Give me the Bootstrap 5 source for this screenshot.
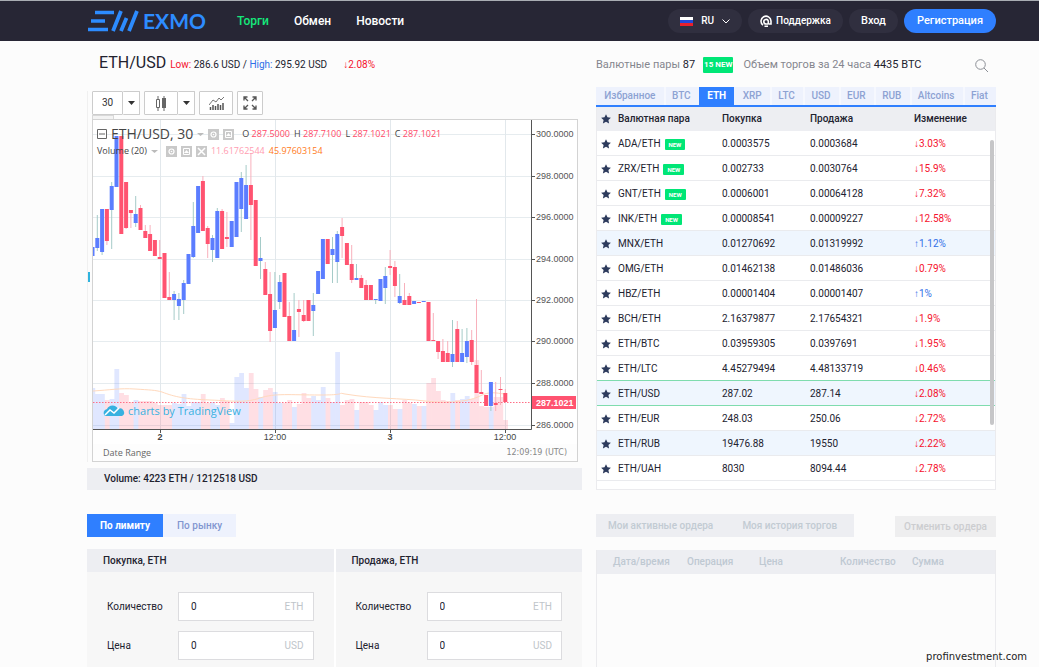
<!DOCTYPE html>
<html lang="ru">
<head>
<meta charset="utf-8">
<meta name="viewport" content="width=device-width, initial-scale=1">
<title>EXMO — ETH/USD</title>
<link href="https://cdn.jsdelivr.net/npm/bootstrap@5.3.0/dist/css/bootstrap.min.css" rel="stylesheet">
<style>
:root{--ink:#22222f;--blue:#2f7fff;--head:#edeef2;--soft:#eef2fd;--red:#f5122d}
body{font-family:Roboto,"Liberation Sans",sans-serif;font-size:10px;line-height:16px;color:var(--ink);background:#fcfcfc}
a{text-decoration:none}
.shell{padding-left:87px;padding-right:43px}
.cols{column-gap:14px}
.topbar{background:#272635;border-top:1px solid #a9adb3;height:41px;font-size:12px}
.topbar .nav{column-gap:25px}
.topbar .nav-link{color:#fff;padding:0;font-weight:500}
.topbar .nav-link.active{color:#15e87b}
.logo{width:126px}
.brandtext{font-family:Lato,sans-serif;font-size:21px;font-weight:700;line-height:24px;color:#2d8cff}
.pills{column-gap:6px}
.pill{background:#302f3f;color:#fff;border:0;border-radius:12px;height:24px;font-weight:500;font-size:11px;line-height:16px;padding:0 12px}
.pill.compact{font-size:10px}
.pill.primary{background:var(--blue);padding:0 13px}
.leftcol{flex:495 1 0;min-width:0}
.rightcol{flex:400 1 0;min-width:0}
.titlebar{height:50px;white-space:nowrap;padding-bottom:2px}
.titlebar.stats{height:46px}
.titlebar h1{font-size:16px;line-height:20px;font-weight:400}
.down{color:var(--red)} .up{color:#2f6fe8}
.muted{color:#85868e}
.fs11{font-size:11px}
.newcount{background:#00e676;color:#fff;font-size:8px;font-weight:700;line-height:16px;padding:0 1px;border-radius:1px;margin:0 10px 0 8px}
.tool{background:#fff;border:1px solid #ccc;border-radius:1px;height:24px;padding:0;color:#333;font-size:10px;display:flex;align-items:center;justify-content:center}
.tool+.tool.joined{border-left:0}
.t-arrow{width:17px}.t-text{width:31px}.t-wide{width:34px}.t-square{width:26px}
.chartwrap{border-left:1px solid #f0f0f0;padding-left:4px;padding-right:4px}
.chartbox{border:1px solid #d3d3d3;background:#fff}
.chartbox svg.plot{display:block;width:100%;height:auto}
.handle{width:22px;height:4px;border:1px solid #d8d8d8;border-bottom:0;background:#f3f3f3}
.sidetab{left:0;top:181px;width:2px;height:10px;background:#2fb3de}
.legend{left:4px;top:5px;font-family:"Open Sans",sans-serif;color:#444;font-size:9px;line-height:16px;white-space:nowrap}
.legend .sym{font-size:14px;line-height:18px}
.legend .vol{color:#ff9db1}
.legend .avg{color:#ff7b23}
.val{color:#ff4a68}
.foot{font-family:"Open Sans",sans-serif;font-size:9px;line-height:17px;color:#666;background:#fdfdfd;padding:0 10px}
.foot .clock{font-family:"DejaVu Sans",sans-serif;font-size:8px;color:#888}
.strip{background:var(--head);font-weight:500;line-height:22px;padding-left:17px;margin-top:6px}
.pairs .nav-link{background:var(--soft);color:#8da2d3;font-weight:500;font-size:10px;line-height:18px;padding:0 7px;border-radius:0}
.pairs .nav-link:not(.active)+.nav-link:not(.active){box-shadow:inset 2px 0 #f6f8fe}
.pairs .nav-link.active{background:var(--blue);color:#fff;font-weight:700}
.pairs{border-bottom:2px solid var(--blue)}
.quotes{table-layout:fixed;border-collapse:separate;border-spacing:0;font-size:10px;line-height:16px;color:var(--ink);background:#fff}
.quotes>thead>tr>th{background:var(--head);padding:4px 0;border:0;font-weight:500;color:var(--ink);height:24px;vertical-align:middle}
.quotes>tbody>tr>td{padding:5px 0 3px;border-bottom:1px solid #eaebee;color:var(--ink);background:transparent;height:25px;vertical-align:middle}
.quotes>tbody>tr.tint>td{background:#eff6fe}
.quotes>tbody>tr.chosen>td{border-bottom-color:#7fdcae;background:#eff6fe}
.quotes>tbody>tr.prechosen>td{border-bottom-color:#7fdcae}
.quotes>tbody>tr>td.down{color:var(--red)} .quotes>tbody>tr>td.up{color:#2f6fe8}
.quotes .c1{width:21px}.quotes .c2{width:104px}.quotes .c3{width:88px}.quotes .c4{width:104px}
.quotes .starcell{line-height:1}
.quotes svg{display:block;margin-left:4px}
.tag{background:#00e676;color:#fff;font-size:6px;font-weight:700;line-height:11px;padding:0 4px;border-radius:1px;margin-left:4px}
.pairbox{border:1px solid #ebebee;border-top:0;background:#fff}
.scrollthumb{right:1px;top:33px;width:4px;height:285px;background:#c6c6c8;border-radius:2px}
.modes .btn{border:0;border-radius:0;font-size:10px;line-height:23px;padding:0 14px;background:var(--soft);color:#8296d0;font-weight:500}
.modes .btn.active{background:var(--blue);color:#fff;font-weight:700;padding:0 13px}
.panelhead{background:var(--head);font-weight:500;line-height:23px;padding:0 16px}
.ticket{background:#f7f7f7}
.ticket label{flex:none;width:71px}
.ticket .form-control{font-size:10px;line-height:17px;padding:5px 12px;border:1px solid #dcdcdf;border-radius:0;color:var(--ink);height:29px}
.ticket .unit{right:10px;top:7px;color:#c0c5ca}
.fields{padding:20px 20px 6px;row-gap:10px}
.faded .btn{font-size:10px;color:#c2cbd3;border:0;border-radius:0;background:var(--head);font-weight:500;line-height:23px;padding:0 12px;min-width:129px}
.faded .btn.cancel{background:#eeeeef;color:#cccdd0;line-height:21px;padding:0 8px;min-width:101px}
.ordersbox{margin-top:13px}
.orders{table-layout:fixed;font-size:10px;line-height:16px}
.orders>thead>tr>th{background:var(--head);color:#bfc9d2;padding:4px 0;border:0;font-weight:500;height:23px}
.orders .o1{width:90px}.orders .o2{width:72px}.orders .o3{width:81px}
.source{right:12px;bottom:2px;font-family:"DejaVu Sans",sans-serif;font-size:10px;color:#222}
</style>
</head>
<body class="min-vh-100 d-flex flex-column position-relative">
<svg class="d-none" aria-hidden="true">
  <symbol id="star" viewBox="0 0 10 10"><path fill="#2c3a5c" d="M5 .2 6.500 3.300 9.900 3.700 7.400 6 8.100 9.500 5 7.800 1.900 9.500 2.600 6 .1 3.700 3.500 3.300z"/></symbol>
  <symbol id="mini-eye" viewBox="0 0 11 11"><path fill="#c9c9c9" d="M0 0h11v11H0z"/><circle cx="5.500" cy="5.500" r="2.500" fill="none" stroke="#fff" stroke-width="1.200"/><circle cx="5.500" cy="5.500" r=".8" fill="#fff"/></symbol>
  <symbol id="mini-up" viewBox="0 0 11 11"><path fill="#c9c9c9" d="M0 0h11v11H0z"/><path fill="none" stroke="#fff" d="M2.500 2.500h6v6h-6z"/><path fill="#fff" d="M5.500 4 8 7H3z"/></symbol>
  <symbol id="mini-x" viewBox="0 0 11 11"><path fill="#c9c9c9" d="M0 0h11v11H0z"/><path stroke="#fff" stroke-width="1.500" d="m2 2 7 7M9 2 2 9"/></symbol>
  <symbol id="caret" viewBox="0 0 7 4"><path d="M0 0h7L3.500 4z" fill="#333"/></symbol>
</svg>
<header class="topbar shell d-flex align-items-center">
  <a href="#" class="logo d-flex align-items-center" aria-label="EXMO">
    <svg width="52" height="22" viewBox="0 0 52 22" fill="none" stroke="#2d8cff" stroke-width="3.500" aria-hidden="true">
      <path d="M8 2.500H27M4 11H18M1 19.500H21"/><path d="M26 21 34 1M34 21 39.500 8M42 21 50 1" stroke-width="3.800"/>
    </svg>
    <span class="brandtext ps-1">EXMO</span>
  </a>
  <nav class="nav ms-4 flex-nowrap">
    <a class="nav-link active" href="#">Торги</a><a class="nav-link" href="#">Обмен</a><a class="nav-link" href="#">Новости</a>
  </nav>
  <div class="pills d-flex ms-auto align-items-center">
    <button class="pill compact d-flex align-items-center" type="button">
      <svg width="13" height="9" aria-hidden="true"><path fill="#fff" d="M0 0h13v3H0z"/><path fill="#2447d8" d="M0 3h13v3H0z"/><path fill="#e8202c" d="M0 6h13v3H0z"/></svg>
      <span class="mx-2">RU</span>
      <svg width="8" height="5" fill="none" stroke="#fff" aria-hidden="true"><path d="M.5.5 4 4 7.500.500"/></svg>
    </button>
    <button class="pill compact d-flex align-items-center" type="button">
      <svg class="me-1" width="12" height="12" fill="none" stroke="#fff" stroke-width="1.600" aria-hidden="true"><path d="M3 10.200A5 5 0 1 1 11 6v3H8.500M4.500 11.200h3.500"/><path d="M8.500 9H6A2.300 2.300 0 1 1 8.300 6v3"/></svg>
      Поддержка
    </button>
    <button class="pill" type="button">Вход</button>
    <button class="pill primary" type="button">Регистрация</button>
  </div>
</header>

<main class="shell d-flex flex-column flex-grow-1">
  <div class="d-flex cols">
    <section class="leftcol">
      <div class="titlebar d-flex align-items-center ps-2">
        <h1 class="mb-1 ms-1 me-1">ETH/USD</h1>
        <span><span class="down">Low:</span> 286.6 USD / <span class="up">High:</span> 295.92 USD</span>
        <span class="down ms-3">↓2.08%</span>
      </div>
      <div class="chartwrap position-relative">
        <div class="sidetab position-absolute"></div>
        <div class="d-flex gap-1">
          <div class="d-flex"><button class="tool t-text" type="button">30</button><button class="tool joined t-arrow" type="button" aria-label="Интервал"><svg width="7" height="4"><use href="#caret"/></svg></button></div>
          <div class="d-flex"><button class="tool t-wide" type="button" aria-label="Свечи"><svg width="12" height="15"><path d="M3 0v15M9 0v15" stroke="#666"/><path d="M1.500 3.500h3v8h-3z" fill="#fff" stroke="#666"/><path d="M7 2h4v10H7z" fill="#666"/></svg></button><button class="tool joined t-arrow" type="button" aria-label="Тип графика"><svg width="7" height="4"><use href="#caret"/></svg></button></div>
          <button class="tool t-wide" type="button" aria-label="Индикаторы"><svg width="15" height="14" fill="none" stroke="#555"><path d="M1.500 14v-3M4 14v-5M6.500 14v-4M9 14V8M11.500 14v-5M14 14V7" stroke-width="1.500"/><path d="M0 9 4 4l3 2 3-4 2 2 3-3" stroke-width=".8"/></svg></button>
          <button class="tool t-square" type="button" aria-label="Полный экран"><svg width="14" height="14" fill="none" stroke="#555" stroke-width="1.300"><path d="M1 4.500V1h3.500M1 1l4 4M9.500 1H13v3.500M13 1 9 5M1 9.500V13h3.500M1 13l4-4M13 9.500V13H9.500M13 13 9 9"/></svg></button>
        </div>
        <div class="handle"></div>
        <div class="chartbox position-relative">
          <svg class="plot" id="plot" viewBox="93 120 484 324" role="img" aria-label="График ETH/USD"></svg>
          <div class="legend position-absolute">
            <div class="d-flex align-items-center">
              <svg width="10" height="10" fill="#fff" stroke="#666"><path d="M.5.5h9v9h-9zM2 5h6"/></svg>
              <span class="sym ms-1">ETH/USD, 30</span>
              <svg class="ms-1" width="7" height="3"><path d="M0 0h7L3.500 3z" fill="#bbb"/></svg>
              <svg class="ms-1" width="11" height="11"><use href="#mini-eye"/></svg><svg class="ms-1" width="11" height="11"><use href="#mini-up"/></svg>
              <span class="ms-1 ps-1">O <span class="val">287.5000</span></span><span class="ms-1">H <span class="val">287.7100</span></span><span class="ms-1">L <span class="val">287.1021</span></span><span class="ms-1">C <span class="val">287.1021</span></span>
            </div>
            <div class="d-flex align-items-center">
              <span>Volume (20)</span>
              <svg class="ms-1" width="7" height="3"><path d="M0 0h7L3.500 3z" fill="#bbb"/></svg>
              <svg class="ms-2" width="11" height="11"><use href="#mini-eye"/></svg><svg class="ms-1" width="11" height="11"><use href="#mini-up"/></svg><svg class="ms-1" width="11" height="11"><use href="#mini-x"/></svg>
              <span class="vol ms-1">11.61762544</span><span class="avg ms-1">45.97603154</span>
            </div>
          </div>
          <div class="foot d-flex justify-content-between"><span>Date Range</span><span class="clock">12:09:19 (UTC)</span></div>
        </div>
      </div>
      <div class="strip">Volume: 4223 ETH / 1212518 USD</div>
    </section>

    <section class="rightcol">
      <div class="titlebar stats d-flex align-items-center fs11 pt-1">
        <span><span class="muted">Валютные пары</span> 87</span>
        <span class="newcount">15 NEW</span>
        <span><span class="muted">Объем торгов за 24 часа</span> 4435 BTC</span>
        <button class="btn p-0 border-0 ms-auto me-2 lh-1" type="button" aria-label="Поиск"><svg width="13" height="13" fill="none" stroke="#8c8f96"><circle cx="5.500" cy="5.500" r="4.800"/><path d="m9 9 4 4"/></svg></button>
      </div>
      <nav class="nav nav-fill flex-nowrap pairs">
        <a class="nav-link" href="#">Избранное</a><a class="nav-link" href="#">BTC</a><a class="nav-link active" href="#">ETH</a><a class="nav-link" href="#">XRP</a><a class="nav-link" href="#">LTC</a><a class="nav-link" href="#">USD</a><a class="nav-link" href="#">EUR</a><a class="nav-link" href="#">RUB</a><a class="nav-link" href="#">Altcoins</a><a class="nav-link" href="#">Fiat</a>
      </nav>
      <div class="pairbox position-relative pb-2">
        <table class="table quotes mb-0">
          <thead><tr><th class="c1 starcell"><svg width="10" height="10"><use href="#star"/></svg></th><th class="c2">Валютная пара</th><th class="c3">Покупка</th><th class="c4">Продажа</th><th>Изменение</th></tr></thead>
          <tbody id="rows"></tbody>
        </table>
        <div class="scrollthumb position-absolute"></div>
      </div>
    </section>
  </div>

  <div class="d-flex cols flex-grow-1 mt-4">
    <section class="leftcol d-flex flex-column">
      <div class="modes d-flex"><button class="btn active" type="button">По лимиту</button><button class="btn" type="button">По рынку</button></div>
      <div class="row g-0 flex-grow-1 pt-2 mt-1">
        <form class="col ticket border-end border-2 border-white">
          <div class="panelhead">Покупка, ETH</div>
          <div class="fields d-flex flex-column">
            <div class="d-flex align-items-center"><label for="b1">Количество</label><div class="position-relative flex-grow-1"><input id="b1" class="form-control" value="0"><span class="unit position-absolute">ETH</span></div></div>
            <div class="d-flex align-items-center"><label for="b2">Цена</label><div class="position-relative flex-grow-1"><input id="b2" class="form-control" value="0"><span class="unit position-absolute">USD</span></div></div>
          </div>
        </form>
        <form class="col ticket">
          <div class="panelhead">Продажа, ETH</div>
          <div class="fields d-flex flex-column">
            <div class="d-flex align-items-center"><label for="s1">Количество</label><div class="position-relative flex-grow-1"><input id="s1" class="form-control" value="0"><span class="unit position-absolute">ETH</span></div></div>
            <div class="d-flex align-items-center"><label for="s2">Цена</label><div class="position-relative flex-grow-1"><input id="s2" class="form-control" value="0"><span class="unit position-absolute">USD</span></div></div>
          </div>
        </form>
      </div>
    </section>
    <section class="rightcol faded d-flex flex-column">
      <div class="d-flex justify-content-between align-items-end">
        <div class="d-flex"><button class="btn" type="button">Мои активные ордера</button><button class="btn" type="button">Моя история торгов</button></div>
        <button class="btn cancel" type="button">Отменить ордера</button>
      </div>
      <div class="pairbox ordersbox bg-transparent flex-grow-1 border-bottom-0">
        <table class="table orders mb-0"><thead><tr><th class="o1 ps-3">Дата/время</th><th class="o2">Операция</th><th class="o3">Цена</th><th class="o2">Количество</th><th>Сумма</th></tr></thead></table>
      </div>
    </section>
  </div>
</main>
<div class="source position-absolute">profinvestment.com</div>

<script src="https://cdn.jsdelivr.net/npm/bootstrap@5.3.0/dist/js/bootstrap.bundle.min.js"></script>
<script>
// pair, buy, sell, change, is new, row class
const quotes = [
 ['ADA/ETH','0.0003575','0.0003684',-3.03,1],['ZRX/ETH','0.002733','0.0030764',-15.9,1],
 ['GNT/ETH','0.0006001','0.00064128',-7.32,1],['INK/ETH','0.00008541','0.00009227',-12.58,1],
 ['MNX/ETH','0.01270692','0.01319992',1.12,0,'tint'],['OMG/ETH','0.01462138','0.01486036',-0.79],
 ['HBZ/ETH','0.00001404','0.00001407',1],['BCH/ETH','2.16379877','2.17654321',-1.9],
 ['ETH/BTC','0.03959305','0.0397691',-1.95],['ETH/LTC','4.45279494','4.48133719',-0.46,0,'prechosen'],
 ['ETH/USD','287.02','287.14',-2.08,0,'chosen'],['ETH/EUR','248.03','250.06',-2.72],
 ['ETH/RUB','19476.88','19550',-2.22,0,'tint'],['ETH/UAH','8030','8094.44',-2.78]];
const star = '<svg width="10" height="10"><use href="#star"/></svg>';
document.getElementById('rows').innerHTML = quotes.map(q => `<tr class="${q[5]||''}"><td class="starcell">${star}</td><td><div class="d-flex align-items-center">${q[0]}${q[4]?'<span class="tag">NEW</span>':''}</div></td><td>${q[1]}</td><td>${q[2]}</td><td class="${q[3]<0?'down':'up'}">${q[3]<0?'↓':'↑'}${Math.abs(q[3])}%</td></tr>`).join('');

// colour, body top, body bottom, wick top, wick bottom, volume top
const candles = `b 247 256 247 256 388;b 238 248 215 251 394;b 209 252 209 255 394;r 209 241 209 245 400;b 186 210 182 249 399;b 136 187 136 187 369;r 136 234 136 234 393;r 182 228 182 229 395;r 210 213 210 228 402;b 214 223 196 227 400;r 208 230 205 230 401;r 231 238 225 238 401;r 234 251 225 251 401;r 240 256 240 256 403;r 257 259 240 259 405;r 253 298 253 298 405;r 297 300 272 300 405;b 294 300 291 320 403;b 299 306 293 320 404;b 283 300 280 314 394;b 254 284 254 284 406;b 226 257 202 258 402;b 186 233 186 233 402;r 181 231 176 231 394;r 228 244 226 258 403;b 238 250 235 262 402;b 211 258 208 258 405;r 211 249 209 249 398;r 237 239 212 247 401;b 221 247 221 247 423;b 182 237 182 237 377;b 178 209 172 232 373;b 185 219 165 219 388;r 185 205 153 240 373;r 200 266 200 266 389;b 258 261 237 279 397;r 269 295 262 295 390;r 294 331 272 342 388;b 310 328 272 328 392;b 282 302 275 309 403;r 273 317 273 317 403;r 316 341 302 341 400;b 330 341 293 341 407;r 309 312 300 337 404;r 315 321 300 322 393;r 300 321 300 321 398;b 305 311 293 336 396;b 271 294 271 294 400;b 239 279 239 279 387;r 239 264 239 264 398;b 249 255 237 283 402;b 234 262 231 283 352;r 227 236 218 258 405;r 243 265 243 265 400;r 264 280 245 283 399;b 278 280 264 280 410;r 278 288 275 288 402;r 285 300 280 300 402;r 285 300 285 300 405;b 299 300 299 304 410;b 279 301 279 301 402;b 276 288 267 304 405;r 266 268 250 275 405;r 267 286 261 297 409;b 296 303 274 304 409;r 300 305 283 305 400;r 296 305 293 305 403;b 301 304 301 304 404;r 302 303 302 303 406;b 301 302 301 302 406;r 302 341 302 341 383;r 340 341 313 341 378;r 341 352 341 359 391;r 351 362 339 362 400;r 353 362 341 362 401;b 354 362 320 367 393;r 329 362 321 362 400;b 353 362 329 362 399;b 341 357 328 363 396;r 340 362 330 365 399;r 365 393 299 393 360;r 392 394 370 394 406;r 395 406 395 406 407;b 382 406 382 411 407;r 403 405 382 411 397;r 389 390 377 405 397;r 393 402 389 402 420`.split(';').map(s => s.split(' '));
let g = '';
const levels = [[134,'300.0000'],[176,'298.0000'],[217,'296.0000'],[259,'294.0000'],[300,'292.0000'],[341,'290.0000'],[383,'288.0000'],[425,'286.0000']];
const times = [[160,'2',1],[275,'12:00'],[390,'3',1],[505,'12:00']];
for (const [y] of levels) g += `<path d="M93 ${y}.5H531" stroke="#e6ecef"/>`;
for (const [x] of times) g += `<path d="M${x}.5 120V429" stroke="#e2e8ec"/>`;
candles.forEach(([c,,,,,v], i) => { const l = Math.max(93, 90.4 + 4.8*i); g += `<rect x="${l}" y="${v}" width="${95.2+4.8*i-l}" height="${429-v}" fill="${c=='b'?'#5b7dff':'#ff5370'}" fill-opacity=".19"/>`; });
g += '<path d="M93 391C110 390 120 388 135 389S155 390 162 392C175 397 185 399 210 400S245 403 260 398S290 395 320 395S335 392 345 394C375 399 400 398 425 401S470 401 480 396 495 393 505 394" fill="none" stroke="#ffd9bd"/>';
g += '<path d="M93 402.500H531" stroke="#ff6f86" stroke-dasharray="1.500 1.500"/>';
candles.forEach(([c,t,b,wt,wb], i) => { const x = 92.5 + 4.8*i, l = Math.max(93, x-2); g += `<path d="M${x} ${wt}V${wb}" stroke="${c=='b'?'#a5cbc8':'#f8b1bc'}"/><rect x="${l}" y="${t}" width="${x+2-l}" height="${b-t}" fill="${c=='b'?'#5b7dff':'#ff5370'}"/>`; });
g += '<path d="M531.500 120V429.500M93 429.500H531.500" fill="none" stroke="#555"/>';
for (const [y,t] of levels) g += `<path d="M532 ${y}.5h3" stroke="#555"/><text x="536" y="${y+3}" font-size="9" fill="#555">${t}</text>`;
for (const [x,t,bold] of times) g += `<path d="M${x}.5 430v3" stroke="#555"/><text x="${x}" y="440" font-size="9" text-anchor="middle" fill="#444" font-weight="${bold?700:400}">${t}</text>`;
g += '<rect x="532" y="396" width="44" height="13" fill="#ff5370"/><text x="536" y="406" font-size="9" font-weight="700" fill="#fff">287.1021</text>';
g += '<path d="M105 416a4 4 0 0 1 2-7 6 6 0 0 1 11 0 4 4 0 0 1 4 7z" fill="#37b1e0"/><path d="m105 415 5-5 4 3 5-5" fill="none" stroke="#fff" stroke-width="1.500"/><text x="128" y="415" font-size="11" fill="#37b1e0" font-family="Open Sans">charts by TradingView</text>';
const plot = document.getElementById('plot');
plot.setAttribute('font-family', 'Liberation Sans');
plot.innerHTML = g;
</script>
</body>
</html>
